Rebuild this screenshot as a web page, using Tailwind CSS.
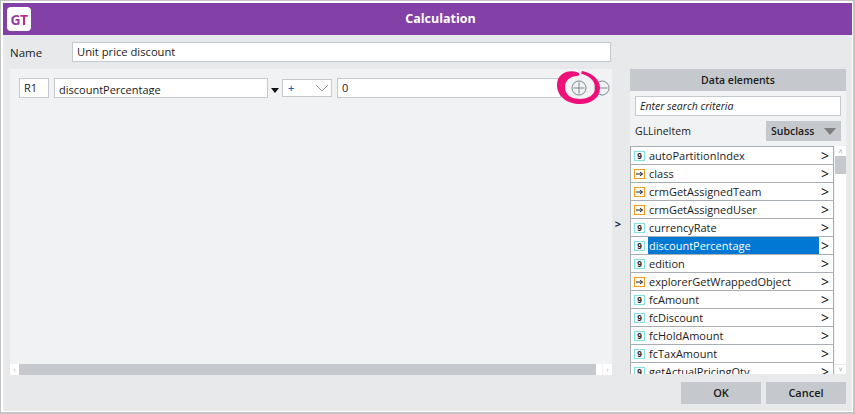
<!DOCTYPE html>
<html lang="en">
<head>
<meta charset="UTF-8">
<title>Calculation</title>
<script src="https://cdn.jsdelivr.net/npm/@tailwindcss/browser@4"></script>
</head>
<body class="bg-white font-['Open_Sans',sans-serif] text-[11px] text-[#1b1b1b] overflow-hidden">
<div class="w-[855px] h-[414px] border-r-2 border-b-2 border-l border-t border-[#c4c4c4] pl-[2px] pt-[2px] pr-px pb-px bg-white">
  <div class="relative flex flex-col h-full bg-[#e8e9ea]">
    <!-- title bar -->
    <div class="relative flex items-center justify-center h-[32px] shrink-0 pl-[26px] bg-[#8340a6]">
      <div class="absolute left-[4px] top-[4px] flex items-center justify-center w-[24px] h-[24px] rounded-[4px] bg-white text-[14px] font-bold tracking-[-0.5px]">
        <span class="bg-gradient-to-r from-[#7a3aa8] to-[#d01a80] bg-clip-text text-transparent">GT</span>
      </div>
      <span class="text-[12.500px] font-bold text-white">Calculation</span>
    </div>

    <div class="flex flex-1 min-h-0">
      <!-- left side -->
      <div class="flex flex-col w-[609px] pl-[7px] pt-[7px] shrink-0">
        <div class="flex items-center h-[20px]">
          <span class="w-[62px] shrink-0 pt-px text-[11.500px]">Name</span>
          <div class="flex items-center w-[539px] h-[20px] px-[4px] pt-px border border-[#c5c9ce] bg-white text-[11.200px]">Unit price discount</div>
        </div>
        <div class="flex flex-col mt-[7px] w-[602px] h-[306px]">
          <div class="relative flex-1 flex items-start pl-[9px] pt-[9px] bg-[#f0f2f4]">
            <div class="flex items-center w-[30px] h-[20px] pl-[4px] border border-[#c5c9ce] bg-white">R1</div>
            <div class="w-[214px] h-[20px] ml-[5px] pl-[4px] pt-[3px] border border-[#c5c9ce] bg-white">
              <span class="block h-[13px] overflow-hidden leading-[16px]">discountPercentage</span>
            </div>
            <svg class="ml-[3px] mt-[10px] w-[8px] h-[5px]" viewBox="0 0 8 5"><path d="M0 0h8L4 5z" fill="#111"/></svg>
            <div class="flex items-center justify-between ml-[3px] mt-px w-[50px] h-[18px] pl-[5px] pr-[2px] border border-[#c5c9ce] bg-white">
              <span class="text-[#1f5fb0] font-semibold">+</span>
              <svg class="w-[14px] h-[8px]" viewBox="0 0 14 8"><path d="M1 1l6 6 6-6" fill="none" stroke="#8a9097"/></svg>
            </div>
            <div class="flex items-center ml-[5px] w-[224px] h-[20px] pl-[4px] pt-px border border-[#c5c9ce] bg-white">0</div>
            <!-- plus / minus buttons -->
            <svg class="absolute left-[561px] top-[11px] w-[16px] h-[16px]" viewBox="0 0 16 16"><circle cx="8" cy="8" r="7" fill="none" stroke="#7d8791"/><path d="M8 2.500v11M2.500 8h11" stroke="#7d8791"/></svg>
            <svg class="absolute left-[584px] top-[11px] w-[16px] h-[16px]" viewBox="0 0 16 16"><circle cx="8" cy="8" r="7" fill="none" stroke="#7d8791"/><path d="M2.500 8h11" stroke="#7d8791"/></svg>
            <!-- hand drawn ring -->
            <svg class="absolute left-[547px] top-[1px] w-[44px] h-[35px]" viewBox="0 0 44 35">
              <path d="M21 2.500C12 -1 0 3 0 15C0 27 11 34 23 34C34 34 43 28 43 18C43 10 36 3 25 1L24 3.500C32 6 38 10 38 18C38 25 31 29 23 29C14 29 8 25 8 17C8 10 14 6 20 6C23 6 23 4 21 2.500Z" fill="#ee1078"/>
            </svg>
          </div>
          <!-- horizontal scrollbar -->
          <div class="flex h-[11px] shrink-0 bg-[#f0f2f4]">
            <div class="flex items-center justify-center w-[9px] bg-white text-[7px] leading-none text-[#9aa0a6]">‹</div>
            <div class="flex-1 bg-[#c5c9ce]"></div>
            <div class="w-[6px] bg-white"></div>
            <div class="flex items-center justify-center w-[9px] ml-px bg-white text-[7px] leading-none text-[#9aa0a6]">›</div>
          </div>
        </div>
      </div>

      <!-- move arrow -->
      <div class="flex items-center justify-center w-[18px] shrink-0 pt-[2px] pr-[6px] text-[11px] font-bold text-[#0f2a55]">&gt;</div>

      <!-- data elements -->
      <div class="flex flex-col flex-1 min-w-0">
        <div class="flex flex-col mt-[34px] w-[216px]">
          <div class="flex items-center justify-center h-[22px] pt-px bg-[#c5c9ce] text-[10.500px] font-semibold">Data elements</div>
          <div class="flex flex-col h-[55px] px-[5px] pt-[5px] bg-[#f0f2f4]">
            <div class="flex items-center h-[20px] px-[4px] pt-[2px] border border-[#c5c9ce] bg-white text-[10.500px] italic">Enter search criteria</div>
            <div class="flex items-center justify-between mt-[5px] h-[20px]">
              <span class="pt-px text-[10.500px]">GLLineItem</span>
              <div class="flex items-center justify-between w-[75px] h-[20px] px-[5px] pt-px bg-[#c5c9ce] text-[10.500px] font-semibold">
                Subclass
                <svg class="w-[12px] h-[7px]" viewBox="0 0 12 7"><path d="M0 0h12L6 7z" fill="#7d7d7d"/></svg>
              </div>
            </div>
          </div>
          <div class="flex h-[228px] bg-[#f0f2f4]">
            <div id="list" class="w-[204px] h-[228px] overflow-hidden border-x border-[#a9aeb3]"></div>
            <!-- vertical scrollbar -->
            <div class="flex flex-col w-[11px] ml-px bg-white">
              <div class="flex items-center justify-center h-[10px] text-[7px] leading-none text-[#9aa0a6]">˄</div>
              <div class="h-[18px] bg-[#c5c9ce]"></div>
              <div class="flex-1"></div>
              <div class="flex items-center justify-center h-[10px] text-[7px] leading-none text-[#9aa0a6] border-t border-[#e8e9ea]">˅</div>
            </div>
          </div>
        </div>
      </div>
    </div>

    <!-- buttons -->
    <div class="absolute right-[6px] bottom-[7px] flex gap-[5px]">
      <div class="flex items-center justify-center w-[80px] h-[22px] bg-[#c5c9ce] font-semibold">OK</div>
      <div class="flex items-center justify-center w-[80px] h-[22px] bg-[#c5c9ce] font-semibold">Cancel</div>
    </div>
  </div>
</div>
<script>
  // n = numeric field, r = reference field
  const items = [
    ['n', 'autoPartitionIndex'], ['r', 'class'], ['r', 'crmGetAssignedTeam'], ['r', 'crmGetAssignedUser'],
    ['n', 'currencyRate'], ['n', 'discountPercentage'], ['n', 'edition'], ['r', 'explorerGetWrappedObject'],
    ['n', 'fcAmount'], ['n', 'fcDiscount'], ['n', 'fcHoldAmount'], ['n', 'fcTaxAmount'], ['n', 'getActualPricingQty']
  ];
  const numIcon = '<svg class="ml-[3px] w-[11px] h-[10px] shrink-0" viewBox="0 0 11 10"><rect x=".5" y=".5" width="10" height="9" fill="#fff" stroke="#7fe3e6"/><text x="5.500" y="8" font-size="8.500" font-weight="700" text-anchor="middle" fill="#222" font-family="Liberation Mono">9</text></svg>';
  const refIcon = '<svg class="ml-[3px] w-[11px] h-[10px] shrink-0" viewBox="0 0 11 10"><rect x=".5" y=".5" width="10" height="9" fill="#fff" stroke="#f59a1c"/><path d="M2 5h6.500M6 3l2.500 2-2.500 2" fill="none" stroke="#222"/></svg>';
  const list = document.getElementById('list');
  items.forEach(([type, name]) => {
    const selected = name === 'discountPercentage';
    const label = selected ? 'bg-[#0078d4] text-white' : 'text-[#1b1b1b]';
    list.insertAdjacentHTML('beforeend',
      `<div class="flex items-center h-[18px] bg-white border-t border-[#a9aeb3]">
        ${type === 'n' ? numIcon : refIcon}
        <span class="flex items-center h-full w-[171px] ml-[3px] pl-px pt-[2px] ${label}">${name}</span>
        <span class="ml-[2px] text-[14px] leading-none text-[#111]">&gt;</span>
      </div>`);
  });
</script>
</body>
</html>
